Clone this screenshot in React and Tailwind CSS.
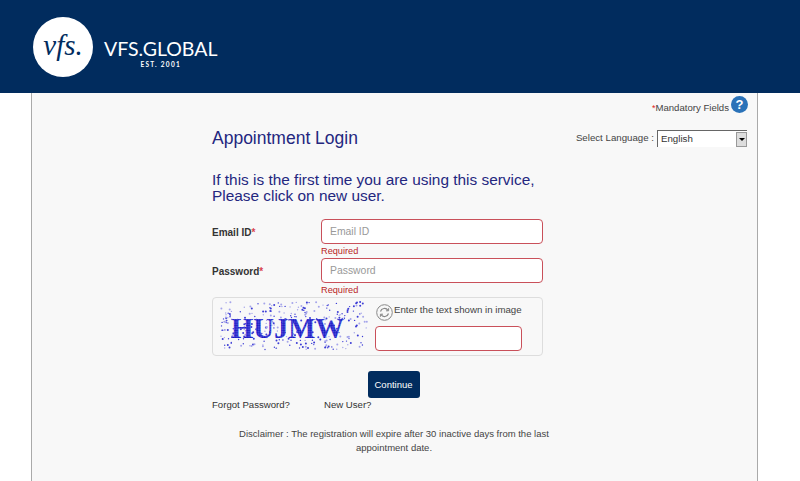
import React from "react";

const F = { fontFamily: '"Liberation Sans", Arial, sans-serif' };

function Noise() {
  let s = 12345;
  const r = () => ((s = (s * 16807) % 2147483647) / 2147483647);
  const dots = [];
  for (let i = 0; i < 300; i++) {
    const big = r() > 0.55;
    dots.push(
      <circle key={i} cx={(r() * 146 + 8).toFixed(1)} cy={(r() * 48 + 4).toFixed(1)} r={big ? 1 : 0.7} fill={r() > 0.45 ? "#3d3dd6" : "#a5a5ea"} />
    );
  }
  return <g>{dots}</g>;
}

function Captcha() {
  return (
    <svg width="162" height="57" className="block">
      <defs>
        <pattern id="captcha-dots" width="2.4" height="2.4" patternUnits="userSpaceOnUse">
          <rect width="2.4" height="2.4" fill="#5a5ae0" />
          <circle cx="1.2" cy="1.2" r="1" fill="#1414c0" />
        </pattern>
      </defs>
      <Noise />
      <text
        x="18"
        y="40"
        textLength="113"
        lengthAdjust="spacingAndGlyphs"
        fontSize="30"
        fontWeight="700"
        fill="url(#captcha-dots)"
        style={{ fontFamily: '"Liberation Serif", serif' }}
      >
        HUJMW
      </text>
    </svg>
  );
}

function Field({ label, placeholder }) {
  return (
    <div className="flex">
      <div className="w-[109px] pt-[7px] text-[10px] leading-[14px] font-bold text-[#333]">
        {label}
        <span className="text-[#d9434e]">*</span>
      </div>
      <div>
        <input
          readOnly
          placeholder={placeholder}
          className="block w-[222px] h-[25px] bg-white border border-[#c9505a] rounded-[4px] pl-[8px] text-[10.4px] placeholder:text-[#999] outline-none"
          style={F}
        />
        <div className="h-[14px] text-[9.2px] leading-[14px] text-[#b81f26]">Required</div>
      </div>
    </div>
  );
}

export default function App() {
  return (
    <div className="w-[800px] h-[481px] overflow-hidden bg-white" style={F}>
      <header className="h-[93px] bg-[#012c5e] flex items-center pl-[33px]">
        <div className="w-[60px] h-[60px] rounded-full bg-white flex items-center justify-center">
          <span className="text-[29px] leading-none italic text-[#012c5e] -mt-[2px]" style={{ fontFamily: '"Liberation Serif", serif' }}>
            vfs.
          </span>
        </div>
        <div className="ml-[11px] mt-[15px] flex flex-col items-center text-white" style={{ fontFamily: 'Lato, sans-serif' }}>
          <div className="text-[19.5px] leading-[21px]">VFS.GLOBAL</div>
          <div className="text-[6.5px] leading-[10px] mt-[1px] font-bold tracking-[1.3px]">EST. 2001</div>
        </div>
      </header>
      <main className="ml-[31px] w-[727px] h-[388px] bg-[#f8f8f8] border-x border-[#aaa] relative">
        <div className="flex justify-end items-start pr-[9px] pt-[3px] h-[28px]">
          <span className="text-[9.6px] leading-[14px] mt-[5px] text-[#444]">
            <span className="text-[#e02020] align-top text-[9px]">*</span>Mandatory Fields
          </span>
          <span className="ml-[2px] w-[17px] h-[17px] rounded-full bg-[#2a72b8] text-white text-[13px] leading-[17px] font-bold text-center">?</span>
        </div>
        <div className="pl-[180px] flex">
          <div className="w-[331px]">
            <div className="pt-[5px] h-[51px] text-[17.5px] leading-[24px] text-[#24277f]">Appointment Login</div>
            <div className="text-[15.4px] leading-[16px] whitespace-nowrap text-[#24277f]">
              If this is the first time you are using this service,
              <br />
              Please click on new user.
            </div>
            <div className="mt-[15px] flex flex-col">
              <Field label="Email ID" placeholder="Email ID" />
              <Field label="Password" placeholder="Password" />
            </div>
            <div className="h-[59px] border border-[#ddd] rounded-[4px] flex">
              <div className="w-[162px] h-[57px]">
                <Captcha />
              </div>
              <div>
                <div className="flex items-start pt-[5px]">
                  <svg width="17" height="17" viewBox="0 0 17 17" className="shrink-0 mt-[1px] ml-[1px]" fill="none" stroke="#888" strokeWidth="1">
                    <circle cx="8.5" cy="8.5" r="7.8" />
                    <path d="M4.5 7.5a4.2 4.2 0 0 1 7.5-1.2M12.5 9.5a4.2 4.2 0 0 1-7.5 1.2" strokeWidth="1.2" />
                    <path d="M12.6 4.2v2.6h-2.6M4.4 12.8v-2.6h2.6" strokeWidth="1" />
                  </svg>
                  <span className="text-[9.7px] leading-[14px] ml-[1px] text-[#444]">Enter the text shown in image</span>
                </div>
                <div className="mt-[5px] w-[147px] h-[25px] bg-white border border-[#c9505a] rounded-[4px]" />
              </div>
            </div>
            <div className="flex justify-center pl-[32px] mt-[15px]">
              <div className="w-[52px] h-[27px] bg-[#012c5e] rounded-[3px] text-white text-[9.5px] leading-[27px] text-center">Continue</div>
            </div>
            <div className="flex text-[9.6px] leading-[14px] text-[#333]">
              <span className="w-[112px]">Forgot Password?</span>
              <span>New User?</span>
            </div>
            <div className="mt-[15px] w-[364px] text-center text-[9.5px] leading-[14px] text-[#444]">
              Disclaimer : The registration will expire after 30 inactive days from the last
              <br />
              appointment date.
            </div>
          </div>
          <div className="absolute right-[10px] top-[37px] flex items-center">
            <span className="text-[9.7px] text-[#444] mr-[3px]">Select Language :</span>
            <div className="w-[90px] h-[17px] bg-white border-l border-t border-[#666] flex justify-between">
              <span className="text-[9.7px] leading-[16px] pl-[3px] text-[#333]">English</span>
              <span className="w-[11px] h-[15px] mt-[1px] bg-[#ddd] border border-[#999] flex items-center justify-center">
                <span className="border-x-[3px] border-t-[3px] border-x-transparent border-t-black" />
              </span>
            </div>
          </div>
        </div>
      </main>
    </div>
  );
}
